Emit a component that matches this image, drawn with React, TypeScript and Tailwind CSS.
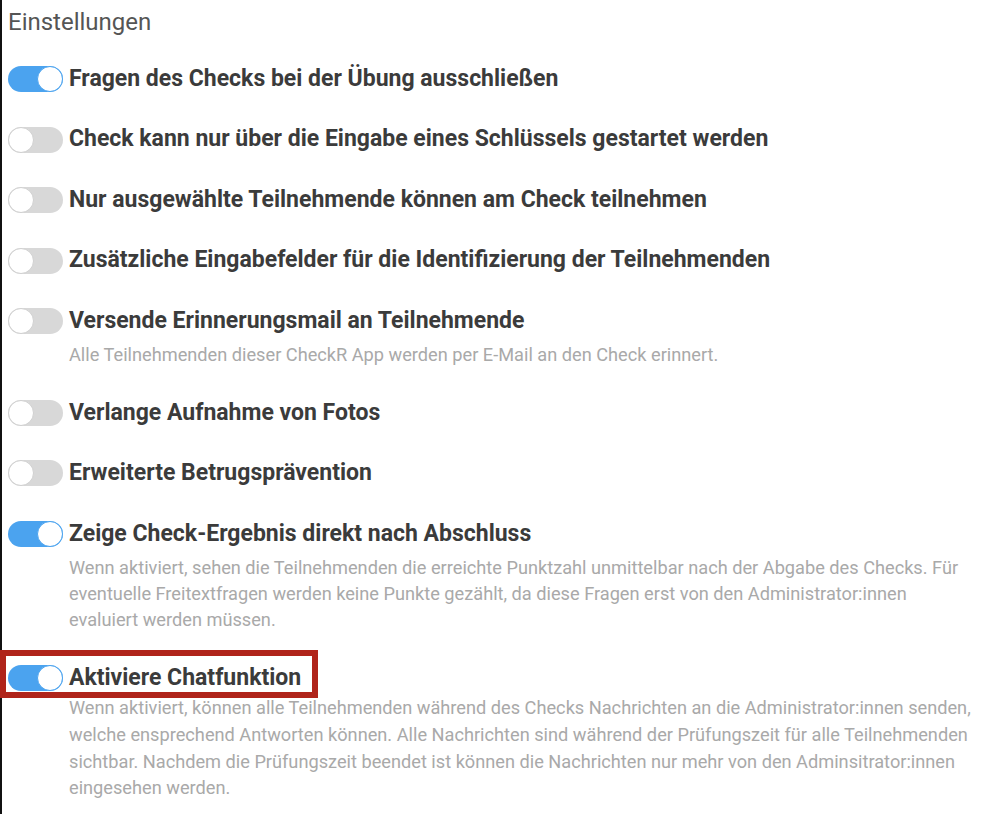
import React from "react";

type Setting = {
  label: string;
  on: boolean;
  description?: string;
  highlight?: boolean;
};

const settings: Setting[] = [
  { label: "Fragen des Checks bei der Übung ausschließen", on: true },
  { label: "Check kann nur über die Eingabe eines Schlüssels gestartet werden", on: false },
  { label: "Nur ausgewählte Teilnehmende können am Check teilnehmen", on: false },
  { label: "Zusätzliche Eingabefelder für die Identifizierung der Teilnehmenden", on: false },
  {
    label: "Versende Erinnerungsmail an Teilnehmende",
    on: false,
    description: "Alle Teilnehmenden dieser CheckR App werden per E-Mail an den Check erinnert.",
  },
  { label: "Verlange Aufnahme von Fotos", on: false },
  { label: "Erweiterte Betrugsprävention", on: false },
  {
    label: "Zeige Check-Ergebnis direkt nach Abschluss",
    on: true,
    description:
      "Wenn aktiviert, sehen die Teilnehmenden die erreichte Punktzahl unmittelbar nach der Abgabe des Checks. Für eventuelle Freitextfragen werden keine Punkte gezählt, da diese Fragen erst von den Administrator:innen evaluiert werden müssen.",
  },
  {
    label: "Aktiviere Chatfunktion",
    on: true,
    highlight: true,
    description:
      "Wenn aktiviert, können alle Teilnehmenden während des Checks Nachrichten an die Administrator:innen senden, welche ensprechend Antworten können. Alle Nachrichten sind während der Prüfungszeit für alle Teilnehmenden sichtbar. Nachdem die Prüfungszeit beendet ist können die Nachrichten nur mehr von den Adminsitrator:innen eingesehen werden.",
  },
];

function Toggle({ on }: { on: boolean }) {
  return (
    <span
      className={
        on
          ? "relative flex h-[26px] w-[55px] shrink-0 items-center justify-end rounded-full bg-[#4ba3ef]"
          : "relative flex h-[26px] w-[55px] shrink-0 items-center justify-start rounded-full bg-[#d8d8d8]"
      }
    >
      <span
        className={
          on
            ? "h-[26px] w-[26px] rounded-full border border-[#4ba3ef] bg-white"
            : "h-[26px] w-[26px] rounded-full border border-[#d0d0d0] bg-white"
        }
      />
    </span>
  );
}

export default function App() {
  return (
    <div
      className="min-h-screen border-l-2 border-[#111] bg-white px-[6px] pb-6"
      style={{ fontFamily: "Roboto, 'Liberation Sans', sans-serif" }}
    >
      <h2 className="pt-[8px] text-[24px] leading-[28px] font-normal text-[#555]">Einstellungen</h2>

      <div className="mt-[25px] flex flex-col gap-[24.5px]">
        {settings.map((s) => (
          <div key={s.label} className="flex flex-col">
            <div className="relative flex h-[36px] items-center gap-[6px]">
              <Toggle on={s.on} />
              <span className="text-[23px] font-bold whitespace-nowrap text-[#3b3b3b]">{s.label}</span>
              {s.highlight && (
                <span className="pointer-events-none absolute top-[-10px] left-[-8px] h-[48px] w-[318px] border-[6px] border-[#b0241a]" />
              )}
            </div>
            {s.description && (
              <p
                className={
                  s.highlight
                    ? "mt-[-1px] pl-[61px] text-[18.2px] leading-[26.7px] text-[#a9a9a9]"
                    : "mt-[3px] mb-[2px] pl-[61px] text-[18.2px] leading-[26.3px] text-[#a9a9a9]"
                }
              >
                {s.description}
              </p>
            )}
          </div>
        ))}
      </div>
    </div>
  );
}
